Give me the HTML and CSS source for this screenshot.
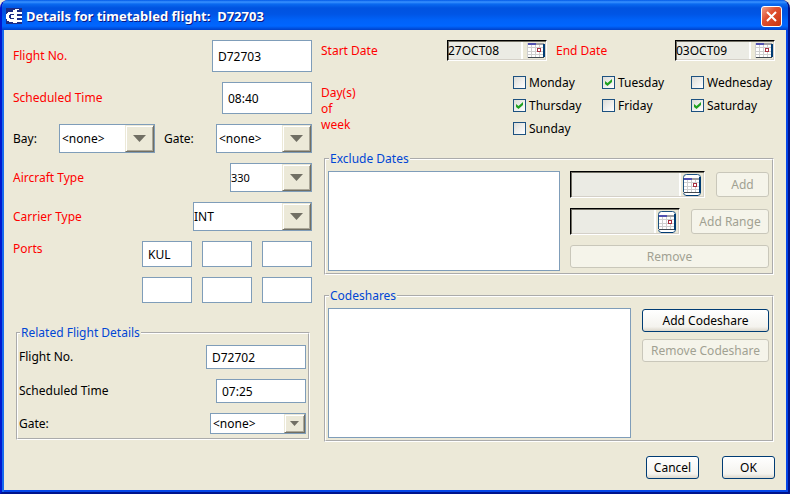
FILE: index.html
```html
<!DOCTYPE html>
<html lang="en">
<head>
<meta charset="utf-8">
<title>Details for timetabled flight</title>
<link rel="stylesheet" href="styles.css">
</head>
<body>
<svg class="defs" aria-hidden="true">
  <symbol id="cal" viewBox="0 0 18 15">
    <rect width="17" height="15" fill="#cfcfcf"/>
    <rect width="8" height="2" x="1" fill="#5050b0"/>
    <rect x="9" width="8" height="2" fill="#a0a0a4"/>
    <path fill="#fff" d="M1 2h3v2h-3zM5 2h3v2h-3zM9 2h3v2h-3zM13 2h3v2h-3zM1 5h3v3h-3zM5 5h3v3h-3zM9 5h3v3h-3zM13 5h3v3h-3zM1 9h3v2h-3zM5 9h3v2h-3zM9 9h3v2h-3zM13 9h3v2h-3zM1 12h3v2h-3zM5 12h3v2h-3zM9 12h3v2h-3zM13 12h3v2h-3z"/>
    <rect x="10.5" y="5.500" width="3" height="3" fill="#fff" stroke="#a83040"/>
    <path fill="#404850" d="M1 14h16v1H1z"/>
    <path fill="#003c74" d="M16 1h2v13h-2z"/>
  </symbol>
  <symbol id="cal-button" viewBox="0 0 18 22">
    <rect x=".5" y=".5" width="17" height="21" rx="3" fill="#fff" stroke="#1c5180"/>
    <use href="#cal" y="4" width="18" height="15"/>
    <path fill="#1c5180" d="M0 4h1v14H0z"/>
    <path fill="#003c74" d="M3 21h12v1H3zM16 3h2v16h-2z"/>
  </symbol>
</svg>
<main class="window">
  <header class="titlebar">
    <svg class="logo" viewBox="0 0 16 16" aria-hidden="true" shape-rendering="crispEdges">
      <rect width="16" height="16" fill="#1c2c84"/>
      <path fill="#fff" d="M2 4h5V2h2V1h2v14H7v-1H3v-1H1v-2H0V6h1V5h1z"/>
      <path fill="#1c2c84" d="M4 6h4v1H5v3h3v1H4v-1H3V7h1z"/>
      <path fill="#fff" d="M11 1h2v1h-2zM11 4h5v2h-5zM11 8h5v2h-5zM11 12h5v2h-5z"/>
    </svg>
    <h1>Details for timetabled flight:&nbsp; D72703</h1>
    <button class="close" type="button" aria-label="Close">
      <svg viewBox="0 0 19 19" aria-hidden="true"><path d="M5 5l9 9M14 5l-9 9" stroke="#fff" stroke-width="2"/></svg>
    </button>
  </header>

  <form class="content">
    <section class="left">
      <div class="row tall required">
        <label for="flight">Flight No.</label>
        <input id="flight" class="text w100" value="D72703">
      </div>
      <div class="row tall required">
        <label for="time">Scheduled Time</label>
        <input id="time" class="text w90" value="08:40">
      </div>
      <div class="row stands">
        <label for="bay">Bay:</label>
        <span class="combo w96"><select id="bay"><option>&lt;none&gt;</option></select></span>
        <label for="gate">Gate:</label>
        <span class="combo w96"><select id="gate"><option>&lt;none&gt;</option></select></span>
      </div>
      <div class="row required">
        <label for="aircraft">Aircraft Type</label>
        <span class="combo flush small-text w82"><select id="aircraft"><option>330</option></select></span>
      </div>
      <div class="row required">
        <label for="carrier">Carrier Type</label>
        <span class="combo flush w119"><select id="carrier"><option>INT</option></select></span>
      </div>
      <div class="row ports required">
        <label for="port1">Ports</label>
        <div class="port-grid">
          <input id="port1" class="text" value="KUL">
          <input class="text" aria-label="Port 2">
          <input class="text" aria-label="Port 3">
          <input class="text" aria-label="Port 4">
          <input class="text" aria-label="Port 5">
          <input class="text" aria-label="Port 6">
        </div>
      </div>
      <fieldset class="related">
        <legend>Related Flight Details</legend>
        <div class="row short">
          <label for="rflight">Flight No.</label>
          <input id="rflight" class="text w100" value="D72702">
        </div>
        <div class="row short">
          <label for="rtime">Scheduled Time</label>
          <input id="rtime" class="text w90" value="07:25">
        </div>
        <div class="row compact">
          <label for="rgate">Gate:</label>
          <span class="combo mini w96"><select id="rgate"><option>&lt;none&gt;</option></select></span>
        </div>
      </fieldset>
    </section>

    <section class="right">
      <div class="dates required">
        <label for="start">Start Date</label>
        <span class="date w100"><input id="start" value="27OCT08"><button type="button" aria-label="Pick start date"><svg aria-hidden="true"><use href="#cal"/></svg></button></span>
        <label for="end">End Date</label>
        <span class="date w100"><input id="end" value="03OCT09"><button type="button" aria-label="Pick end date"><svg aria-hidden="true"><use href="#cal"/></svg></button></span>
      </div>
      <div class="days">
        <p id="days-label">Day(s)<br>of<br>week</p>
        <div class="day-grid" role="group" aria-labelledby="days-label">
          <label><input type="checkbox">Monday</label>
          <label><input type="checkbox" checked>Tuesday</label>
          <label><input type="checkbox">Wednesday</label>
          <label><input type="checkbox" checked>Thursday</label>
          <label><input type="checkbox">Friday</label>
          <label><input type="checkbox" checked>Saturday</label>
          <label><input type="checkbox">Sunday</label>
        </div>
      </div>
      <fieldset class="exclude">
        <legend>Exclude Dates</legend>
        <div class="panel">
          <select class="list" size="5" aria-label="Excluded dates"></select>
          <div class="actions">
            <div class="pair">
              <span class="date big"><input aria-label="Exclude date"><button type="button" aria-label="Pick date"><svg aria-hidden="true"><use href="#cal-button"/></svg></button></span>
              <button class="btn w53" type="button" disabled>Add</button>
            </div>
            <div class="pair">
              <span class="date big"><input aria-label="Exclude range end"><button type="button" aria-label="Pick range date"><svg aria-hidden="true"><use href="#cal-button"/></svg></button></span>
              <button class="btn w78" type="button" disabled>Add Range</button>
            </div>
            <button class="btn" type="button" disabled>Remove</button>
          </div>
        </div>
      </fieldset>
      <fieldset class="codeshares">
        <legend>Codeshares</legend>
        <div class="panel">
          <select class="list" size="6" aria-label="Codeshares"></select>
          <div class="actions">
            <button class="btn" type="button">Add Codeshare</button>
            <button class="btn" type="button" disabled>Remove Codeshare</button>
          </div>
        </div>
      </fieldset>
      <footer>
        <button class="btn w53" type="button">Cancel</button>
        <button class="btn w53" type="button">OK</button>
      </footer>
    </section>
  </form>
</main>
</body>
</html>
```

FILE: styles.css
```css
* { box-sizing: border-box; }

body {
  margin: 0;
  background: #ece9d8;
  color: #000;
  font: 12px/16px "Noto Sans", Tahoma, sans-serif;
}

input, select, button { font: inherit; color: inherit; margin: 0; }
h1, p { margin: 0; }
.defs { position: absolute; width: 0; height: 0; }

.window {
  display: flex;
  flex-direction: column;
  min-height: 100vh;
  padding: 0 2px 2px;
  background: #ece9d8;
  border: 2px solid;
  border-color: #0054e3 #00138c #00138c #0019cf;
  border-top: 0;
  border-radius: 8px 8px 0 0;
  box-shadow: inset 2px 0 #166aee, inset -2px 0 #0546e8, inset 0 -2px #0546e8;
  overflow: hidden;
}

.titlebar {
  display: flex;
  align-items: center;
  gap: 4px;
  height: 30px;
  margin: 0 -2px;
  padding: 2px 6px 0 4px;
  background: linear-gradient(#0058e6 0, #3a93ff 2px, #0a6af0 4px, #0053e0 8px, #0055e5 14px, #0062f8 20px, #0066ff 26px, #0040c8 30px);
}
.logo { width: 16px; height: 16px; }
.titlebar h1 {
  flex: 1;
  color: #fff;
  font-size: 13px;
  line-height: 16px;
  text-shadow: 1px 1px #0a1883;
}
.close {
  width: 21px;
  height: 21px;
  padding: 0;
  border: 1px solid #fff;
  border-radius: 3px;
  background: linear-gradient(135deg, #f0a088, #e05030 40%, #c83410);
}
.close svg { display: block; width: 19px; height: 19px; }

.content {
  flex: 1;
  display: grid;
  grid-template-columns: 299px 1fr;
  gap: 9px;
  padding: 10px 11px 11px 9px;
}

.left { display: flex; flex-direction: column; gap: 10px; }
.row { display: flex; align-items: center; justify-content: space-between; height: 29px; }
.row.tall { height: 32px; }
.row.short { height: 24px; }
.row.compact { height: 21px; }
.row.ports { height: auto; align-items: flex-start; }
.row.stands { display: grid; grid-template-columns: 46px 96px 1fr 96px; }
.stands .combo + label { padding-left: 9px; }
.required > label, .days p { color: #f00; }

.w53 { width: 53px; }
.w78 { width: 78px; }
.w82 { width: 82px; }
.w90 { width: 90px; }
.w96 { width: 96px; }
.w100 { width: 100px; }
.w119 { width: 119px; }

.text {
  height: 100%;
  padding: 0 4px 0 5px;
  border: 1px solid #7f9db9;
  border-radius: 0;
  background: #fff;
}
.port-grid { display: grid; grid-template-columns: repeat(3, 50px); grid-auto-rows: 26px; gap: 10px; }
.port-grid .text { width: 50px; }

.combo { position: relative; height: 100%; }
.combo select {
  width: 100%;
  height: 100%;
  padding: 0 0 0 2px;
  border: 1px solid #7f9db9;
  border-radius: 0;
  background: #fff;
  appearance: none;
}
.combo.flush select { padding-left: 0; }
.combo.small-text { font-size: 11px; }
.combo::before, .combo::after { content: ""; position: absolute; pointer-events: none; }
.combo::before {
  top: 1px;
  right: 1px;
  bottom: 1px;
  width: 27px;
  background: #ece9d8;
  border: 1px solid;
  border-color: #ece9d8 #716f64 #716f64 #ece9d8;
  box-shadow: inset 1px 1px #fff, inset -1px -1px #aca899;
}
.combo::after {
  top: 11px;
  right: 9px;
  width: 13px;
  height: 7px;
  background: #716f64;
  clip-path: polygon(0 0, 100% 0, 50% 100%);
}
.combo.mini::before { width: 19px; }
.combo.mini::after { top: 8px; right: 7px; width: 9px; height: 5px; }

fieldset {
  min-width: 0;
  margin: 0;
  padding: 4px 2px 2px;
  border: 2px groove #fff;
}
legend { padding: 0 1px; margin-left: 1px; color: #0046d5; }
.related {
  display: flex;
  flex-direction: column;
  gap: 10px;
  margin: 12px 2px 0 3px;
  padding: 4px 2px 4px 1px;
}

.right { display: flex; flex-direction: column; min-width: 0; }
.dates { display: flex; align-items: center; height: 21px; }
.dates label:first-child { width: 126px; }
.dates .date + label { margin-left: 9px; flex: 1; }

.date {
  display: flex;
  height: 21px;
  background: #ebebe4;
  border: 1px solid;
  border-color: #000 #fff #fff #000;
  box-shadow: inset 1px 1px #716f64, inset -1px -1px #d4d0c8;
}
.date input { flex: 1; width: 0; min-width: 0; padding: 0; border: 0; background: none; }
.date button {
  display: flex;
  align-items: center;
  width: 24px;
  padding: 0 0 0 4px;
  margin: 1px;
  border: 0;
  border-left: 2px solid #fff;
  background: #ece9d8;
}
.date svg { flex: none; width: 18px; height: 15px; }
.date.big { flex: 1; min-width: 0; height: 27px; }
.date.big button { padding-left: 2px; }
.date.big svg { height: 22px; }

.days { display: flex; justify-content: space-between; margin-top: 10px; }
.days p { padding-top: 14px; }
.day-grid { display: grid; grid-template-columns: 89px 89px 84px; grid-auto-rows: 23px; }
.day-grid label { display: flex; align-items: center; gap: 3px; }
.day-grid input {
  width: 13px;
  height: 13px;
  appearance: none;
  border: 1px solid #1c5180;
  background: linear-gradient(135deg, #dcdcd7, #fff);
}
.day-grid input:checked::before {
  content: "";
  display: block;
  width: 7px;
  height: 7px;
  margin: 2px;
  background: #21a121;
  clip-path: polygon(0 29%, 36% 57%, 100% 0, 100% 43%, 36% 100%, 0 71%);
}

.right fieldset { margin: 0 1px 0 3px; padding-right: 3px; }
.right .exclude { margin-top: 11px; }
.right .codeshares { margin-top: 13px; flex: 1; }
.panel { display: flex; height: 100%; }
.list {
  flex: 1;
  min-width: 0;
  padding: 0;
  border: 1px solid #7f9db9;
  border-radius: 0;
  background: #fff;
}
.exclude .list { height: 100px; }
.codeshares .list { height: 130px; }
.actions { display: flex; flex-direction: column; gap: 7px; padding-top: 1px; }
.exclude .actions { width: 199px; margin-left: 10px; padding-top: 0; gap: 10px; }
.codeshares .actions { width: 127px; margin-left: 11px; }
.pair { display: flex; align-items: center; gap: 11px; height: 27px; }
.pair .btn { height: 25px; }

.btn {
  height: 23px;
  padding: 0;
  border: 1px solid #003c74;
  border-radius: 3px;
  background: linear-gradient(#fff, #f4f3ee 80%, #dcd7cb);
}
.btn:disabled { color: #a1a192; border-color: #c9c7ba; background: #f5f4ea; }

footer { display: flex; justify-content: flex-end; gap: 23px; margin-top: 14px; }
```
